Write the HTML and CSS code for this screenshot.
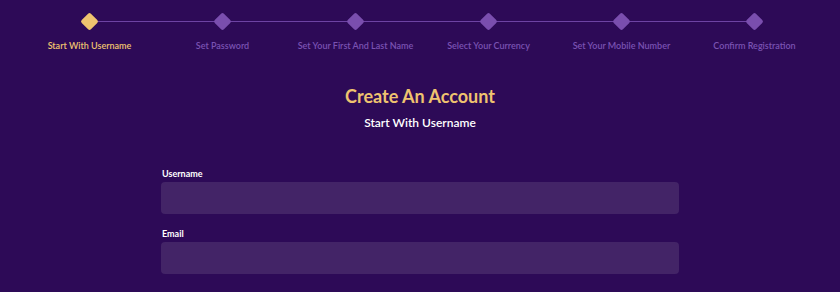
FILE: index.html
```html
<!DOCTYPE html>
<html lang="en">
<head>
    <meta charset="UTF-8">
    <meta name="viewport" content="width=device-width, initial-scale=1.0">
    <title>Create An Account</title>
    <link rel="stylesheet" href="styles.css">
</head>
<body>
    <div class="steps">
        <div class="step active"><span class="dot"></span><span class="label">Start With Username</span></div>
        <div class="step"><span class="dot"></span><span class="label">Set Password</span></div>
        <div class="step"><span class="dot"></span><span class="label">Set Your First And Last Name</span></div>
        <div class="step"><span class="dot"></span><span class="label">Select Your Currency</span></div>
        <div class="step"><span class="dot"></span><span class="label">Set Your Mobile Number</span></div>
        <div class="step last"><span class="dot"></span><span class="label">Confirm Registration</span></div>
    </div>

    <div class="heading">
        <h1>Create An Account</h1>
        <h2>Start With Username</h2>
    </div>

    <form class="form">
        <label class="field">
            <span class="field-label">Username</span>
            <input type="text" class="input">
        </label>
        <label class="field">
            <span class="field-label">Email</span>
            <input type="email" class="input">
        </label>
    </form>
</body>
</html>
```

FILE: styles.css
```css
* {
    box-sizing: border-box;
    margin: 0;
    padding: 0;
}
body {
    font-family: Lato, "Noto Sans", sans-serif;
    background-color: #2d0a57;
    color: #fff;
    overflow: hidden;
}
.steps {
    display: flex;
    padding: 12px 19px 0 23px;
}
.step {
    flex: 1;
    display: flex;
    flex-direction: column;
    align-items: center;
    position: relative;
}
.step::after {
    content: "";
    position: absolute;
    top: 9px;
    left: 50%;
    width: 100%;
    height: 1px;
    background: #6d43a3;
}
.step.last::after {
    display: none;
}
.dot {
    width: 13px;
    height: 13px;
    margin: 3px 0;
    background: #7a4eae;
    border-radius: 2px;
    transform: rotate(45deg);
    position: relative;
    z-index: 1;
}
.step.active .dot {
    background: #efc36f;
}
.label {
    margin-top: 9px;
    font-size: 9px;
    font-weight: 600;
    color: #7a52b2;
    white-space: nowrap;
}
.step.active .label {
    color: #efc36f;
}
.heading {
    text-align: center;
    margin-top: 34px;
}
h1 {
    font-size: 18px;
    font-weight: bold;
    color: #efc36f;
}
h2 {
    margin-top: 8px;
    font-size: 12px;
    font-weight: 600;
    color: #fff;
}
.form {
    width: 518px;
    margin: 38px auto 0;
    display: flex;
    flex-direction: column;
    gap: 14px;
}
.field {
    display: flex;
    flex-direction: column;
    gap: 3px;
}
.field-label {
    font-size: 9px;
    font-weight: bold;
    padding-left: 1px;
}
.input {
    height: 32px;
    border: none;
    border-radius: 4px;
    background: #432467;
    color: #fff;
    padding: 0 10px;
    font: inherit;
    outline: none;
}
```
